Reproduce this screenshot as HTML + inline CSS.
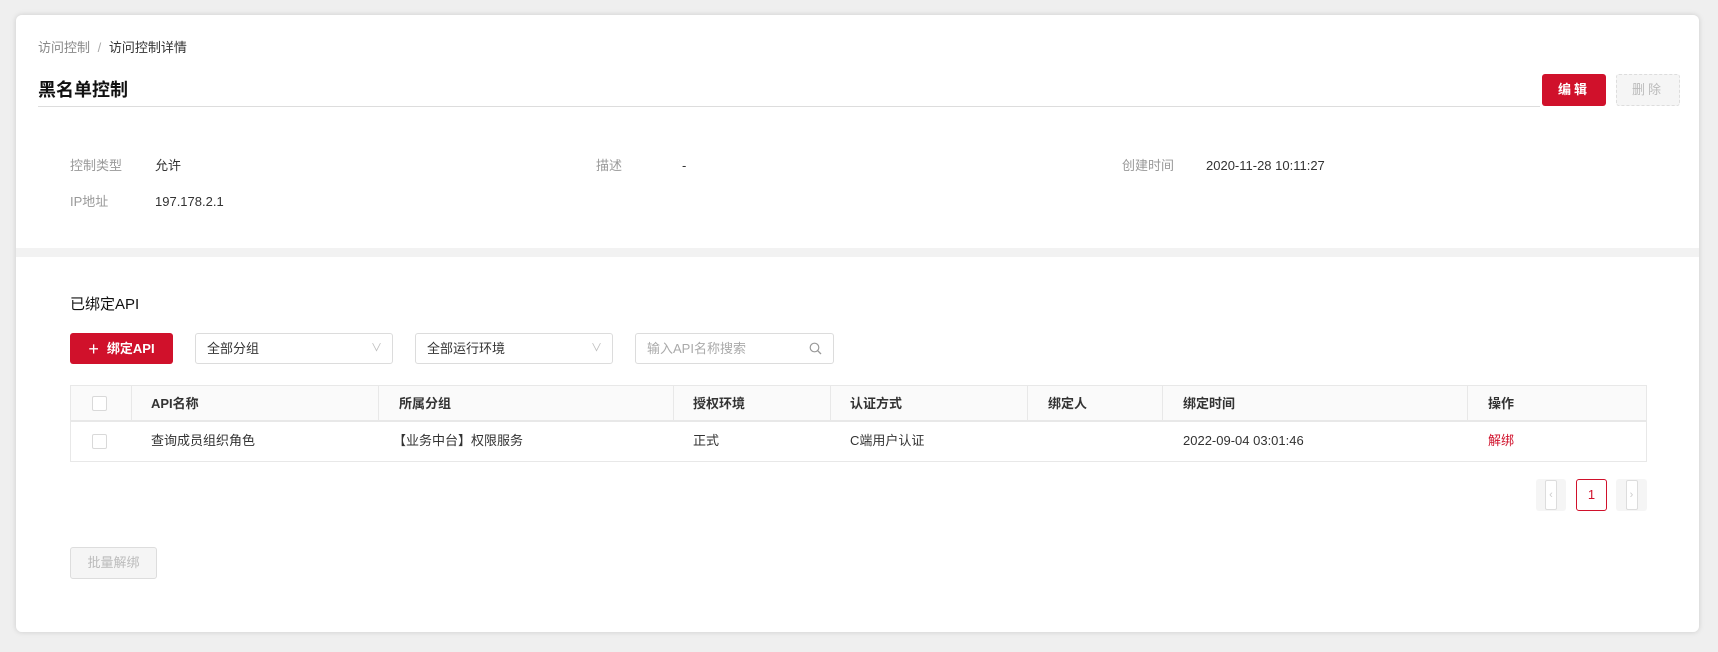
<!DOCTYPE html>
<html><head><meta charset="utf-8"><style>
*{box-sizing:border-box;margin:0;padding:0}
body{width:1718px;height:652px;background:#efefef;font-family:"Liberation Sans","Noto Sans CJK SC",sans-serif;font-size:13px;line-height:18px;color:#333;position:relative;overflow:hidden}
.wrap{position:absolute;left:16px;top:15px;width:1683px;height:617px;background:#f2f2f2;border-radius:6px;box-shadow:0 0 6px rgba(0,0,0,.15);overflow:hidden}
.card{position:absolute;left:0;width:1683px;background:#fff}
.a{position:absolute;white-space:nowrap;line-height:18px}
.btn{position:absolute;display:flex;align-items:center;justify-content:center;border-radius:3px}
.sel{position:absolute;height:31px;border:1px solid #dcdcdc;border-radius:3px;padding-left:11px;line-height:29px;color:#333}
.sel .ch{position:absolute;right:10px;top:0;color:#bbb;font-size:11px}
.th{position:absolute;top:0;height:36px;line-height:36px;font-weight:bold}
.cb{position:absolute;width:15px;height:15px;border:1px solid #d9d9d9;border-radius:2px;background:#fff}
</style></head><body>
<div class="wrap">
<div class="card" style="top:0;height:233px">
  <div class="a" style="left:22px;top:24px;color:#888">访问控制 <span style="color:#aaa;margin:0 4px">/</span> <span style="color:#333">访问控制详情</span></div>
  <div class="a" style="left:22px;top:63px;font-size:18px;line-height:24px;font-weight:bold;color:#111">黑名单控制</div>
  <div class="a" style="left:22px;top:91px;width:1502px;height:1px;background:#ddd"></div>
  <div class="btn" style="left:1526px;top:59px;width:64px;height:32px;background:#d0112b;color:#fff;font-weight:bold;letter-spacing:3px">编辑</div>
  <div class="btn" style="left:1600px;top:59px;width:64px;height:32px;background:#f5f5f5;border:1px dashed #ddd;color:#bbb;letter-spacing:3px">删除</div>
  <div class="a" style="left:54px;top:142px;color:#999">控制类型</div>
  <div class="a" style="left:139px;top:142px">允许</div>
  <div class="a" style="left:54px;top:178px;color:#999">IP地址</div>
  <div class="a" style="left:139px;top:178px">197.178.2.1</div>
  <div class="a" style="left:580px;top:142px;color:#999">描述</div>
  <div class="a" style="left:666px;top:142px">-</div>
  <div class="a" style="left:1106px;top:142px;color:#999">创建时间</div>
  <div class="a" style="left:1190px;top:142px">2020-11-28 10:11:27</div>
</div>
<div class="card" style="top:242px;height:375px">
  <div class="a" style="left:54px;top:38px;font-size:15px;line-height:20px;color:#111">已绑定API</div>
  <div class="btn" style="left:54px;top:76px;width:103px;height:31px;background:#d0112b;color:#fff;font-weight:bold"><span style="font-size:18px;font-weight:normal;margin-right:8px">+</span>绑定API</div>
  <div class="sel" style="left:179px;top:76px;width:198px">全部分组<span class="ch">∨</span></div>
  <div class="sel" style="left:399px;top:76px;width:198px">全部运行环境<span class="ch">∨</span></div>
  <div class="sel" style="left:619px;top:76px;width:199px;color:#aaa">输入API名称搜索
    <svg style="position:absolute;right:11px;top:8px" width="13" height="13" viewBox="0 0 13 13"><circle cx="5.5" cy="5.5" r="4.3" fill="none" stroke="#999" stroke-width="1.2"/><path d="M8.7 8.7L12 12" stroke="#999" stroke-width="1.3"/></svg></div>
  <div class="a" style="left:54px;top:128px;width:1577px;height:77px;border:1px solid #e8e8e8">
    <div class="a" style="left:0;top:0;width:1575px;height:36px;background:#fafafa;border-bottom:2px solid #e8e8e8"></div>
    <div class="cb" style="left:21px;top:10px"></div>
    <div class="a" style="left:60px;top:0;width:1px;height:36px;background:#e8e8e8"></div>
    <div class="th" style="left:80px">API名称</div>
    <div class="a" style="left:307px;top:0;width:1px;height:36px;background:#e8e8e8"></div>
    <div class="th" style="left:328px">所属分组</div>
    <div class="a" style="left:602px;top:0;width:1px;height:36px;background:#e8e8e8"></div>
    <div class="th" style="left:622px">授权环境</div>
    <div class="a" style="left:759px;top:0;width:1px;height:36px;background:#e8e8e8"></div>
    <div class="th" style="left:779px">认证方式</div>
    <div class="a" style="left:956px;top:0;width:1px;height:36px;background:#e8e8e8"></div>
    <div class="th" style="left:977px">绑定人</div>
    <div class="a" style="left:1091px;top:0;width:1px;height:36px;background:#e8e8e8"></div>
    <div class="th" style="left:1112px">绑定时间</div>
    <div class="a" style="left:1396px;top:0;width:1px;height:36px;background:#e8e8e8"></div>
    <div class="th" style="left:1417px">操作</div>
    <div class="cb" style="left:21px;top:48px"></div>
    <div class="a" style="left:80px;top:46px">查询成员组织角色</div>
    <div class="a" style="left:322px;top:46px">【业务中台】权限服务</div>
    <div class="a" style="left:622px;top:46px">正式</div>
    <div class="a" style="left:779px;top:46px">C端用户认证</div>
    <div class="a" style="left:1112px;top:46px">2022-09-04 03:01:46</div>
    <div class="a" style="left:1417px;top:46px;color:#d0112b">解绑</div>
  </div>
  <div class="btn" style="left:1520px;top:222px;width:30px;height:32px;background:#f5f5f5"><div style="width:12px;height:30px;border:1px solid #ddd;border-radius:2px;background:#fff;color:#ccc;font-size:11px;text-align:center;line-height:28px">‹</div></div>
  <div class="btn" style="left:1560px;top:222px;width:31px;height:32px;border:1px solid #d0112b;color:#d0112b">1</div>
  <div class="btn" style="left:1600px;top:222px;width:31px;height:32px;background:#f5f5f5"><div style="width:12px;height:30px;border:1px solid #ddd;border-radius:2px;background:#fff;color:#ccc;font-size:11px;text-align:center;line-height:28px">›</div></div>
  <div class="btn" style="left:54px;top:290px;width:87px;height:32px;background:#f5f5f5;border:1px solid #ddd;color:#bbb">批量解绑</div>
</div>
</div>
</body></html>
